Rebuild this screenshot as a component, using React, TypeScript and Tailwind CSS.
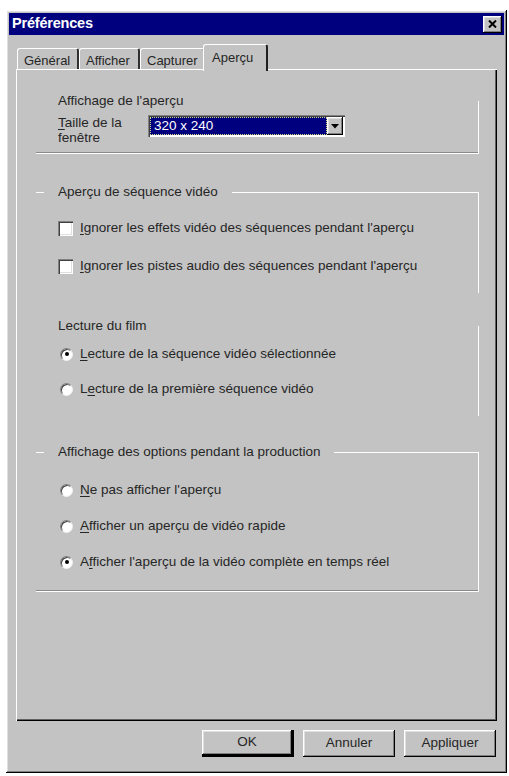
import React from "react";

const raised =
  "bg-[#c3c3c3] shadow-[inset_-1px_-1px_#000,inset_1px_1px_#fff,inset_-2px_-2px_#808080,inset_2px_2px_#dfdfdf]";

function U({ children }: { children: React.ReactNode }) {
  return <span className="underline underline-offset-2">{children}</span>;
}

function Checkbox({ children }: { children: React.ReactNode }) {
  return (
    <div className="flex items-center h-[16px]">
      <span className="w-[15px] h-[15px] bg-white shadow-[inset_1px_1px_#808080,inset_2px_2px_#404040,inset_-1px_-1px_#fff,inset_-2px_-2px_#dfdfdf]" />
      <span className="ml-[7px]">{children}</span>
    </div>
  );
}

function Radio({ checked, children }: { checked?: boolean; children: React.ReactNode }) {
  return (
    <div className="flex items-center h-[16px]">
      <span className="ml-[2px] w-[13px] h-[13px] rounded-full bg-white border border-t-[#808080] border-l-[#808080] border-r-[#eee] border-b-[#eee] flex items-center justify-center shadow-[inset_1px_1px_#404040]">
        {checked && <span className="w-[4px] h-[4px] rounded-full bg-black" />}
      </span>
      <span className="ml-[7px]">{children}</span>
    </div>
  );
}

function Tab({ label, active }: { label: string; active?: boolean }) {
  return (
    <div
      className={
        active
          ? "relative z-10 -mb-[2px] -mx-[2px] h-[27px] px-[8px] pt-[3px] bg-[#c3c3c3] border-t border-l border-white border-r-2 border-r-[#202020] rounded-t-[3px] text-[13px] whitespace-nowrap"
          : "h-[21px] px-[6px] pt-[2px] border-t border-l border-white border-r-2 border-r-[#303030] rounded-t-[3px] text-[13px] whitespace-nowrap overflow-hidden"
      }
    >
      {label}
    </div>
  );
}

function Button({ label, def }: { label: string; def?: boolean }) {
  return (
    <div
      className={
        "w-[92px] h-[27px] flex items-center justify-center text-[13.5px] " +
        raised +
        (def ? " border-r-2 border-b-2 border-[#000] border-t-0 border-l-0" : "")
      }
    >
      {label}
    </div>
  );
}

export default function App() {
  return (
    <div className="w-[509px] h-[776px] bg-white pt-[10px] pl-[6px] font-['Liberation_Sans',Arial,sans-serif] text-[#262626]">
      <div className={"w-[501px] h-[763px] p-[3px] flex flex-col " + raised}>
        {/* title bar */}
        <div className="h-[22px] bg-[#00007e] flex items-center justify-between pl-[3px] pr-[2px]">
          <span className="text-white font-bold text-[14.5px] tracking-[-0.2px]">Préférences</span>
          <div className={"w-[19px] h-[17px] flex items-center justify-center " + raised}>
            <svg width="9" height="8" viewBox="0 0 9 8">
              <path d="M1 0.5 L8 7.5 M8 0.5 L1 7.5" stroke="#000" strokeWidth="2" />
            </svg>
          </div>
        </div>

        <div className="flex-1 flex flex-col px-[7px]">
          {/* tabs */}
          <div className="flex items-end h-[34px] pl-[1px]">
            <div className="w-[62px]"><Tab label="Général" /></div>
            <div className="w-[61px]"><Tab label="Afficher" /></div>
            <div className="w-[65px]"><Tab label="Capturer" /></div>
            <div className="w-[61px]"><Tab label="Aperçu" active /></div>
          </div>

          {/* panel */}
          <div className="flex-1 pt-[25px] pl-[20px] pr-[18px] text-[13.5px] bg-[#c3c3c3] shadow-[inset_1px_1px_#fff,inset_-1px_-1px_#000,inset_-2px_-2px_#606060]">
            <fieldset className="border-0 border-r border-b border-r-white border-b-white shadow-[inset_0_-1px_0_#8a8a8a] pl-[8px] pb-[8px]">
              <legend className="px-[14px] leading-[14px]">Affichage de l'aperçu</legend>
              <div className="ml-[14px] mt-[7px] flex items-start">
                <div className="w-[90px] leading-[15px]">
                  <U>T</U>aille de la
                  <br />
                  fenêtre
                </div>
                <div className="w-[197px] h-[22px] bg-white p-[2px] flex shadow-[inset_1px_1px_#808080,inset_2px_2px_#404040,inset_-1px_-1px_#fff]">
                  <div className="flex-1 bg-[#00007e] text-white border border-dotted border-[#d8d88a] pl-[3px] leading-[16px]">
                    320 x 240
                  </div>
                  <div className={"w-[16px] h-[18px] flex items-center justify-center " + raised}>
                    <svg width="8" height="5" viewBox="0 0 8 5">
                      <path d="M0 0 H8 L4 4.5 Z" fill="#000" />
                    </svg>
                  </div>
                </div>
              </div>
            </fieldset>

            <fieldset className="mt-[31px] border-0 border-t border-r border-t-white border-r-white pl-[8px] pb-[19px]">
              <legend className="px-[14px] leading-[14px]">Aperçu de séquence vidéo</legend>
              <div className="ml-[14px] mt-[21px] flex flex-col gap-[22px]">
                <Checkbox>
                  <U>I</U>gnorer les effets vidéo des séquences pendant l'aperçu
                </Checkbox>
                <Checkbox>
                  <U>I</U>gnorer les pistes audio des séquences pendant l'aperçu
                </Checkbox>
              </div>
            </fieldset>

            <fieldset className="mt-[26px] border-0 border-r border-r-white pl-[8px] pb-[19px]">
              <legend className="px-[14px] leading-[14px]">Lecture du film</legend>
              <div className="ml-[14px] mt-[13px] flex flex-col gap-[19px]">
                <Radio checked>
                  <U>L</U>ecture de la séquence vidéo sélectionnée
                </Radio>
                <Radio>
                  L<U>e</U>cture de la première séquence vidéo
                </Radio>
              </div>
            </fieldset>

            <fieldset className="mt-[29px] border-0 border-t border-r border-b border-white shadow-[inset_0_-1px_0_#8a8a8a] pl-[8px] pb-[21px]">
              <legend className="px-[14px] leading-[14px]">Affichage des options pendant la production</legend>
              <div className="ml-[14px] mt-[23px] flex flex-col gap-[20px]">
                <Radio>
                  <U>N</U>e pas afficher l'aperçu
                </Radio>
                <Radio>
                  <U>A</U>fficher un aperçu de vidéo rapide
                </Radio>
                <Radio checked>
                  A<U>f</U>ficher l'aperçu de la vidéo complète en temps réel
                </Radio>
              </div>
            </fieldset>
          </div>

          {/* buttons */}
          <div className="flex justify-end gap-[9px] mt-[9px] mb-[13px] pr-[1px]">
            <Button label="OK" def />
            <Button label="Annuler" />
            <Button label="Appliquer" />
          </div>
        </div>
      </div>
    </div>
  );
}
